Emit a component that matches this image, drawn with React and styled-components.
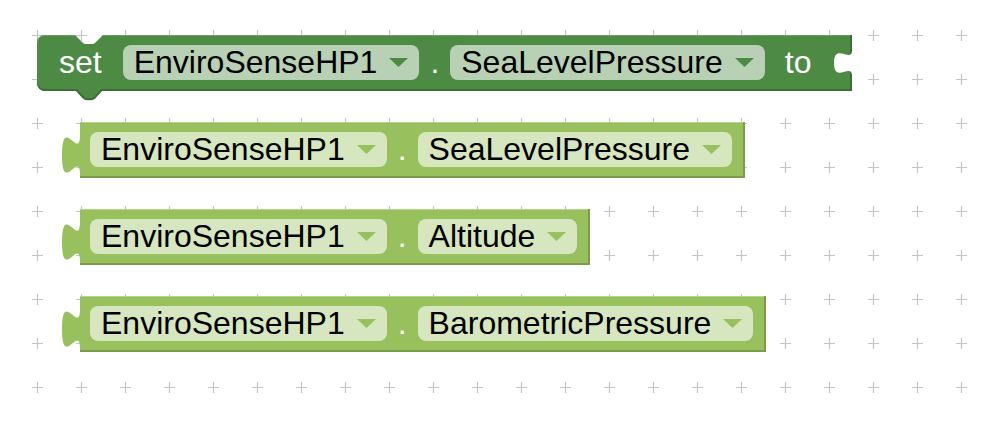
import React from 'react';
import styled, { createGlobalStyle } from 'styled-components';

const Global = createGlobalStyle`
  html, body { margin: 0; padding: 0; background: #fff; }
  body { font-family: "Liberation Sans", Arial, Helvetica, sans-serif; }
`;

const SET = { fill: '#4d8b45', dark: '#3b6d35', light: '#68a060', pill: '#b8d1b4' };
const GET = { fill: '#98c05c', dark: '#7b9d49', light: '#b4d48a', pill: '#d6e6bf' };

const Workspace = styled.div`
  position: relative;
  width: 992px;
  height: 422px;
  overflow: hidden;
  background: #ffffff;
`;

const GridLayer = styled.svg`
  position: absolute;
  left: 0;
  top: 0;
  width: 992px;
  height: 422px;
  z-index: 0;
`;

const Stack = styled.div`
  position: relative;
  z-index: 1;
  display: flex;
  flex-direction: column;
  align-items: flex-start;
  gap: 31px;
  padding: 35px 0 0 37px;
`;

const BlockWrap = styled.div`
  position: relative;
  margin-left: ${(p) => p.$indent}px;
`;

const Body = styled.div`
  position: relative;
  display: flex;
  align-items: center;
  gap: 11px;
  height: 56px;
  box-sizing: border-box;
  padding: 0 ${(p) => p.$pr}px 1px ${(p) => p.$pl}px;
  background: ${(p) => p.$c.fill};
  border-radius: ${(p) => (p.$rounded ? '8px 0 0 8px' : '0')};
  box-shadow: inset 0 -2px 0 ${(p) => p.$c.dark}, inset -2px 0 0 ${(p) => p.$c.dark},
    inset 0 1px 0 ${(p) => p.$c.light};
  clip-path: ${(p) =>
    p.$notch
      ? 'polygon(0 0, 38px 0, 46px 8px, 48px 9px, 56px 9px, 58px 8px, 66px 0, 100% 0, 100% 100%, 0 100%)'
      : 'none'};
`;

const Label = styled.span`
  color: #ffffff;
  font-size: 32px;
  line-height: 35px;
  white-space: nowrap;
  margin: 0 ${(p) => p.$mr || 0}px 0 ${(p) => p.$ml || 0}px;
`;

const Dot = styled.span`
  color: #ffffff;
  font-size: 32px;
  line-height: 35px;
`;

const Pill = styled.div`
  display: flex;
  align-items: center;
  gap: 12px;
  height: 35px;
  padding: 0 11px 0 11px;
  border-radius: 8px;
  background: ${(p) => p.$c.pill};
`;

const PillText = styled.span`
  color: #000000;
  font-size: 32px;
  line-height: 35px;
  white-space: nowrap;
`;

const ArrowSvg = styled.svg`
  display: block;
  width: 19px;
  height: 9px;
  flex: none;
`;

const OutputTab = styled.svg`
  position: absolute;
  left: -18px;
  top: 13px;
  width: 19px;
  height: 40px;
  overflow: visible;
`;

const NextTab = styled.svg`
  position: absolute;
  left: 38px;
  top: 53px;
  width: 28px;
  height: 12px;
  overflow: visible;
`;

const InputSlot = styled.svg`
  position: absolute;
  right: 0;
  top: 15px;
  width: 18px;
  height: 26px;
  overflow: visible;
`;

const Arrow = ({ color }) => (
  <ArrowSvg viewBox="0 0 19 9">
    <path d="M0 0 H19 L9.5 9 Z" fill={color} />
  </ArrowSvg>
);

const Field = ({ c, text }) => (
  <Pill $c={c}>
    <PillText>{text}</PillText>
    <Arrow color={c.fill} />
  </Pill>
);

const TAB_PATH = 'M18,0 C18,26.7 0,-21.3 0,20 C0,61.3 18,13.3 18,40 Z';

const SetBlock = () => (
  <BlockWrap $indent={0}>
    <Body $c={SET} $pl={22} $pr={41} $rounded $notch>
      <Label $mr={10}>set</Label>
      <Field c={SET} text="EnviroSenseHP1" />
      <Dot>.</Dot>
      <Field c={SET} text="SeaLevelPressure" />
      <Label $ml={9}>to</Label>
      <InputSlot viewBox="0 0 18 26">
        <path d="M18,0 C18,14 0,-8 0,13 C0,34 18,12 18,26 Z" fill="#ffffff" />
      </InputSlot>
    </Body>
    <NextTab viewBox="0 0 28 12">
      <path d="M0 0 L8 9 Q10 11 12 11 L16 11 Q18 11 20 9 L28 0 Z" fill={SET.fill} />
      <path d="M1 1.5 L8.5 9.8 Q10 11.2 12 11.2 L16 11.2 Q18 11.2 19.5 9.8 L27 1.5" fill="none" stroke={SET.dark} strokeWidth="2" />
    </NextTab>
  </BlockWrap>
);

const GetBlock = ({ prop }) => (
  <BlockWrap $indent={43}>
    <Body $c={GET} $pl={10} $pr={13}>
      <OutputTab viewBox="0 0 19 40">
        <path d={TAB_PATH + ' M18,0 H19 V40 H18 Z'} fill={GET.fill} />
      </OutputTab>
      <Field c={GET} text="EnviroSenseHP1" />
      <Dot>.</Dot>
      <Field c={GET} text={prop} />
    </Body>
  </BlockWrap>
);

export default function App() {
  return (
    <Workspace>
      <Global />
      <GridLayer viewBox="0 0 992 422">
        <defs>
          <pattern id="bgrid" x="15" y="13" width="44" height="44" patternUnits="userSpaceOnUse">
            <path d="M17 22.5 H28 M22.5 17 V28" stroke="#c4c4c4" strokeWidth="1.2" />
          </pattern>
        </defs>
        <rect x="0" y="0" width="992" height="422" fill="url(#bgrid)" />
      </GridLayer>
      <Stack>
        <SetBlock />
        <GetBlock prop="SeaLevelPressure" />
        <GetBlock prop="Altitude" />
        <GetBlock prop="BarometricPressure" />
      </Stack>
    </Workspace>
  );
}
